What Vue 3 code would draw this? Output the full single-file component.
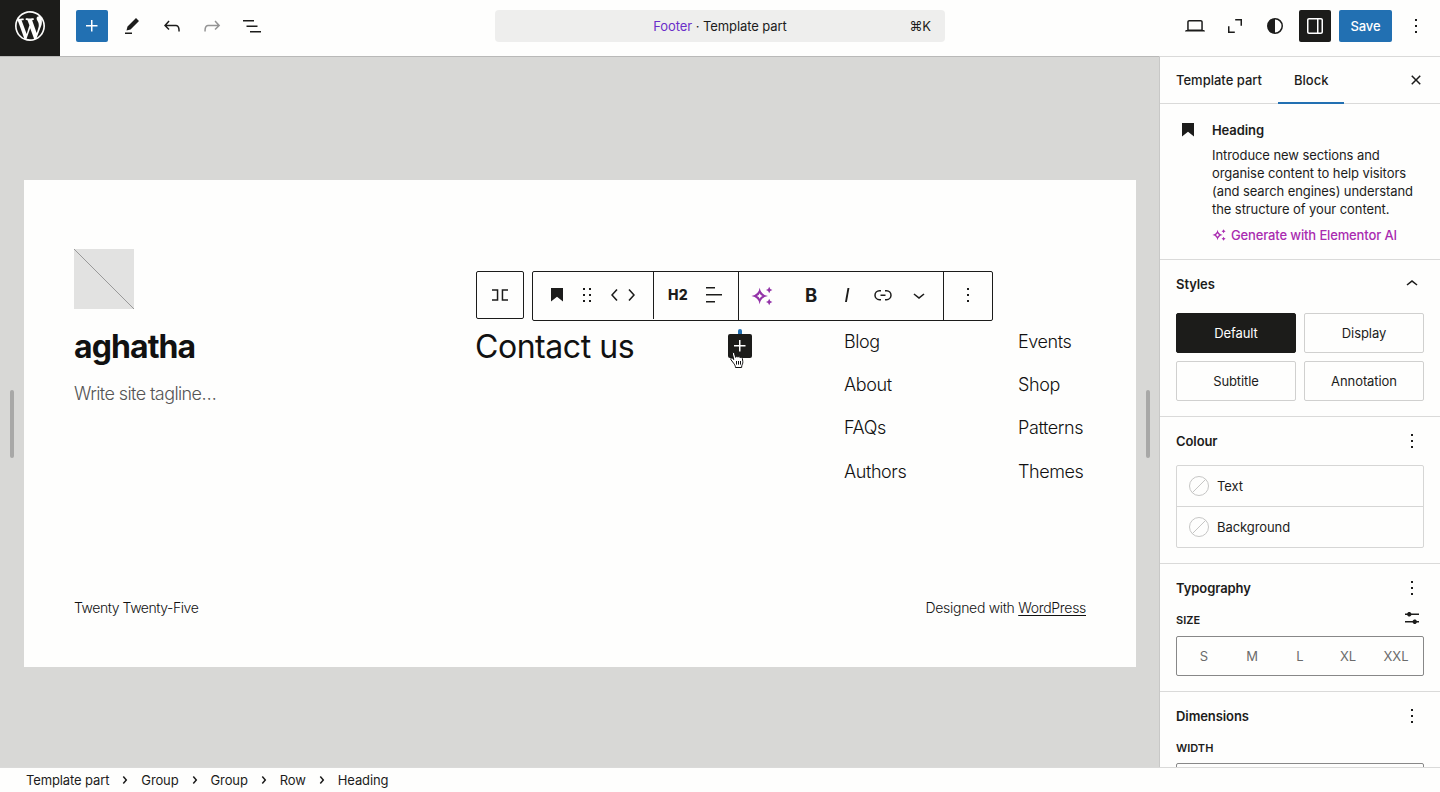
<script setup>
const icons = {
  plus: 'M11 12.5V17.5H12.5V12.5H17.5V11H12.5V6H11V11H6V12.5H11Z',
  pencil: 'm19 7-3-3-8.5 8.5-1 4 4-1L19 7Zm-7 11.5H5V20h7v-1.5Z',
  undo: 'M18.3 11.7c-.6-.6-1.4-.9-2.3-.9H6.7l2.9-3.3-1.1-1-4.5 5L8.5 16l1-1-2.7-2.7H16c.5 0 .9.2 1.3.5 1 1 1 3.4 1 4.5v.3h1.5v-.2c0-1.5 0-4.3-1.5-5.7z',
  redo: 'M15.6 6.5l-1.1 1 2.9 3.3H8c-.9 0-1.7.3-2.3.9-1.4 1.5-1.4 4.2-1.4 5.6v.2h1.5v-.3c0-1.1 0-3.5 1-4.5.3-.3.7-.5 1.3-.5h9.2L14.5 15l1.1 1.1 4.6-4.6-4.6-5z',
  list: 'M3 6h11v1.5H3V6Zm3.5 5.5h11V13h-11v-1.5ZM21 17H10v1.5h11V17Z',
  laptop: 'M20.5 16h-.7V8c0-1.1-.9-2-2-2H6.2c-1.1 0-2 .9-2 2v8h-.7c-.8 0-1.5.7-1.5 1.5h20c0-.8-.7-1.5-1.5-1.5zM5.7 8c0-.3.2-.5.5-.5h11.6c.3 0 .5.2.5.5v7.6H5.7V8z',
  expand: 'M12.2 5H19v6.8h-1.5V6.5h-5.3V5ZM5 12.2h1.5v5.3h5.3V19H5v-6.8Z',
  contrast: 'M20 12a8 8 0 1 1-16 0 8 8 0 0 1 16 0Zm-1.5 0a6.5 6.5 0 0 1-6.5 6.5v-13a6.5 6.5 0 0 1 6.5 6.5Z',
  drawer: 'M18 4H6c-1.1 0-2 .9-2 2v12c0 1.1.9 2 2 2h12c1.1 0 2-.9 2-2V6c0-1.1-.9-2-2-2zm-4 14.5H6c-.3 0-.5-.2-.5-.5V6c0-.3.2-.5.5-.5h8v13zm4.5-.5c0 .3-.2.5-.5.5h-2.5v-13H18c.3 0 .5.2.5.5v12z',
  more: 'M13 19h-2v-2h2v2zm0-6h-2v-2h2v2zm0-6h-2V5h2v2z',
  close: 'M12 13.06l3.712 3.713 1.061-1.06L13.061 12l3.712-3.712-1.06-1.06L12 10.938 8.288 7.227l-1.061 1.06L10.939 12l-3.712 3.712 1.06 1.061L12 13.061z',
  heading: 'M6 5V18.5911L12 13.8473L18 18.5911V5H6Z',
  up: 'M6.5 12.4L12 8l5.5 4.4-.9 1.2L12 10l-4.5 3.6-1-1.2z',
  down: 'M17.5 11.6L12 16l-5.5-4.4.9-1.2L12 14l4.5-3.6 1 1.2z',
  left: 'M14.6 7l-1.2-1L8 12l5.4 6 1.2-1-4.6-5z',
  right: 'M10.6 6L9.4 7l4.6 5-4.6 5 1.2 1 5.4-6z',
  drag: 'M8 7h2V5H8v2zm0 6h2v-2H8v2zm0 6h2v-2H8v2zm6-14v2h2V5h-2zm0 8h2v-2h-2v2zm0 6h2v-2h-2v2z',
  align: 'M13 5.5H4V4h9v1.5Zm7 7H4V11h16v1.5Zm-7 7H4V18h9v1.5Z',
  italic: 'M12.5 5L10 19h1.9l2.5-14z',
  link: 'M10 17.389H8.444A5.194 5.194 0 1 1 8.444 7H10v1.5H8.444a3.694 3.694 0 0 0 0 7.389H10v1.5ZM14 7h1.556a5.194 5.194 0 0 1 0 10.39H14v-1.5h1.556a3.694 3.694 0 0 0 0-7.39H14V7Zm-4.5 6h5v-1.5h-5V13Z',
  crumb: 'M10.8622 8.04053L14.2805 12.0286L10.8622 16.0167L9.72327 15.0405L12.3049 12.0286L9.72327 9.01672L10.8622 8.04053Z',
  settings: 'm19 7.5h-7.628c-.3089-.87389-1.1423-1.5-2.122-1.5-.97966 0-1.81309.62611-2.12197 1.5h-2.12803v1.5h2.12803c.30888.87389 1.14231 1.5 2.12197 1.5.9797 0 1.8131-.62611 2.122-1.5h7.628z m0 7.5h-2.128c-.3089-.8739-1.1423-1.5-2.122-1.5s-1.8131.6261-2.122 1.5h-7.628v1.5h7.628c.3089.8739 1.1423 1.5 2.122 1.5s1.8131-.6261 2.122-1.5h2.128z',
  row: 'M4 6.3h6.3v11.4H4v-1.5h4.8V7.8H4V6.3ZM20 6.3h-6.3v11.4H20v-1.5h-4.8V7.8H20V6.3Z',
  sparkle: 'M8.700 3.800Q9.900 10.800 16.900 12 9.900 13.200 8.700 20.200 7.500 13.200.5 12 7.500 10.800 8.700 3.800Zm0 5.400Q8 11.300 5.900 12 8 12.700 8.700 14.800 9.400 12.700 11.500 12 9.400 11.300 8.700 9.200ZM18.200 2.800l1.100 2.100 2.100 1.100-2.100 1.100-1.100 2.100-1.100-2.100L15 6l2.100-1.100 1.100-2.100ZM18.200 14.800l1.100 2.100 2.100 1.100-2.100 1.100-1.100 2.100-1.100-2.100L15 18l2.100-1.100 1.100-2.100Z',
}
const wp = 'M20 10c0-5.51-4.49-10-10-10C4.48 0 0 4.49 0 10c0 5.52 4.48 10 10 10 5.51 0 10-4.48 10-10zM7.78 15.37L4.37 6.22c.55-.02 1.17-.08 1.17-.08.5-.06.44-1.13-.06-1.11 0 0-1.45.11-2.37.11-.18 0-.37 0-.58-.01C4.12 2.69 6.87 1.11 10 1.11c2.33 0 4.45.87 6.05 2.34-.68-.11-1.65.39-1.65 1.58 0 .74.45 1.36.9 2.1.35.61.55 1.36.55 2.46 0 1.49-1.4 5-1.4 5l-3.03-8.37c.54-.02.82-.17.82-.17.5-.05.44-1.25-.06-1.22 0 0-1.44.12-2.38.12-.87 0-2.33-.12-2.33-.12-.5-.03-.56 1.2-.06 1.22l.92.08 1.26 3.41zM17.41 10c.24-.64.74-1.87.43-4.25.7 1.29 1.05 2.71 1.05 4.25 0 3.29-1.73 6.24-4.4 7.78.97-2.59 1.94-5.2 2.92-7.78zM6.1 18.09C3.12 16.65 1.11 13.53 1.11 10c0-1.3.23-2.48.72-3.59C3.25 10.3 4.67 14.2 6.1 18.09zm4.03-6.63l2.58 6.98c-.86.29-1.76.45-2.71.45-.79 0-1.57-.11-2.29-.33.81-2.38 1.62-4.74 2.42-7.1z'
const navA = ['Blog', 'About', 'FAQs', 'Authors']
const navB = ['Events', 'Shop', 'Patterns', 'Themes']
const crumbs = ['Template part', 'Group', 'Group', 'Row', 'Heading']
const sizes = ['S', 'M', 'L', 'XL', 'XXL']
const intro = ['Introduce new sections and', 'organise content to help visitors', '(and search engines) understand', 'the structure of your content.']
</script>

<template>
  <div class="app">
    <header class="top">
      <div class="logo"><svg width="36" height="36" viewBox="-2 -2 24 24"><path :d="wp" /></svg></div>
      <div class="tools">
        <button class="btn blue"><svg class="i" viewBox="0 0 24 24"><path :d="icons.plus" /></svg></button>
        <button class="btn"><svg class="i" viewBox="0 0 24 24"><path :d="icons.pencil" /></svg></button>
        <button class="btn"><svg class="i" viewBox="0 0 24 24"><path :d="icons.undo" /></svg></button>
        <button class="btn dim"><svg class="i" viewBox="0 0 24 24"><path :d="icons.redo" /></svg></button>
        <button class="btn"><svg class="i" viewBox="0 0 24 24"><path :d="icons.list" /></svg></button>
      </div>
      <div class="command">
        <span></span>
        <span class="doc"><em>Footer</em> · Template part</span>
        <span class="key">⌘K</span>
      </div>
      <div class="actions">
        <button class="btn"><svg class="i" viewBox="0 0 24 24"><path :d="icons.laptop" /></svg></button>
        <button class="btn"><svg class="i" viewBox="0 0 24 24"><path :d="icons.expand" /></svg></button>
        <button class="btn"><svg class="i" viewBox="0 0 24 24"><path fill-rule="evenodd" :d="icons.contrast" /></svg></button>
        <button class="btn dark"><svg class="i" viewBox="0 0 24 24"><path :d="icons.drawer" /></svg></button>
        <button class="save">Save</button>
        <button class="btn"><svg class="i" viewBox="0 0 24 24"><path :d="icons.more" /></svg></button>
      </div>
    </header>

    <div class="main">
      <section class="stage">
        <i class="handle"></i>
        <div class="canvas">
          <div class="upper">
            <div class="brand">
              <svg class="ph" width="60" height="60" viewBox="0 0 60 60"><path d="M0 0 60 60" /></svg>
              <h1>aghatha</h1>
              <p>Write site tagline…</p>
            </div>
            <div class="contact">
              <h2>Contact us</h2>
              <div class="toolbar">
                <div class="parent"><svg class="i" viewBox="0 0 24 24"><path :d="icons.row" /></svg></div>
                <div class="bar">
                  <div class="grp g1">
                    <svg class="i" viewBox="0 0 24 24"><path :d="icons.heading" /></svg>
                    <svg class="i drag" viewBox="0 0 24 24"><path :d="icons.drag" /></svg>
                    <svg class="i mv" viewBox="0 0 24 24"><path :d="icons.left" /></svg>
                    <svg class="i mv2" viewBox="0 0 24 24"><path :d="icons.right" /></svg>
                  </div>
                  <div class="grp g2">
                    <b class="h2t">H2</b>
                    <svg class="i" viewBox="0 0 24 24"><path :d="icons.align" /></svg>
                  </div>
                  <div class="grp g3">
                    <svg class="i ai" viewBox="0 0 24 24"><path fill-rule="evenodd" :d="icons.sparkle" /></svg>
                    <b class="bold">B</b>
                    <svg class="i" viewBox="0 0 24 24"><path :d="icons.italic" /></svg>
                    <svg class="i" viewBox="0 0 24 24"><path :d="icons.link" /></svg>
                    <svg class="i" viewBox="0 0 24 24"><path :d="icons.down" /></svg>
                  </div>
                  <div class="grp g4"><svg class="i" viewBox="0 0 24 24"><path :d="icons.more" /></svg></div>
                </div>
              </div>
              <div class="inserter"><svg class="i" viewBox="0 0 24 24"><path :d="icons.plus" /></svg></div>
              <svg class="cursor" width="17" height="18" viewBox="0 0 17 18">
                <path d="M4.6 12.2 2 8.8C1 7.4 2.5 6.5 3.7 7.6l1.1 1L3.4 3C3 1.3 5 .8 5.5 2.4l1.2 4C6.7 5 8.6 4.900 8.900 6.200 9.300 5.200 10.900 5.400 11.100 6.700 11.800 6 13.200 6.300 13.400 7.600l.4 3c.2 1.900-.6 2.900-1 4.100L12.600 16.500H6.500C6.400 14.800 5.600 13.500 4.600 12.200Z" />
                <path class="fingers" d="M7.500 10v3.600M9.500 10v3.600M11.500 10v3.600" />
              </svg>
            </div>
            <nav><a v-for="t in navA" :key="t">{{ t }}</a></nav>
            <nav class="second"><a v-for="t in navB" :key="t">{{ t }}</a></nav>
          </div>
          <footer class="credit"><span class="tt">Twenty Twenty-Five</span><span class="dw">Designed with <u>WordPress</u></span></footer>
        </div>
        <i class="handle"></i>
      </section>

      <aside class="side">
        <div class="tabs">
          <span class="tab t1">Template part</span><span class="tab on">Block</span>
          <svg class="i" viewBox="0 0 24 24"><path :d="icons.close" /></svg>
        </div>
        <div class="card">
          <svg class="i" viewBox="0 0 24 24"><path :d="icons.heading" /></svg>
          <div>
            <h3>Heading</h3>
            <p><span v-for="l in intro" :key="l">{{ l }}</span></p>
            <a class="gen"><svg width="14" height="14" viewBox="0 1 22 22"><path fill-rule="evenodd" :d="icons.sparkle" /></svg><span>Generate with Elementor AI</span></a>
          </div>
        </div>
        <div class="panel styles">
          <div class="head"><h3>Styles</h3><svg class="i" viewBox="0 0 24 24"><path :d="icons.up" /></svg></div>
          <div class="grid">
            <button class="active">Default</button><button>Display</button><button>Subtitle</button><button>Annotation</button>
          </div>
        </div>
        <div class="panel colour">
          <div class="head"><h3>Colour</h3><svg class="i" viewBox="0 0 24 24"><path :d="icons.more" /></svg></div>
          <div class="swatches">
            <div v-for="c in ['Text', 'Background']" :key="c">
              <svg width="20" height="20" viewBox="0 0 20 20"><circle cx="10" cy="10" r="9.5" /><path d="M3.300 16.700 16.700 3.300" /></svg><span>{{ c }}</span>
            </div>
          </div>
        </div>
        <div class="panel typo">
          <div class="head"><h3>Typography</h3><svg class="i" viewBox="0 0 24 24"><path :d="icons.more" /></svg></div>
          <div class="label"><span>SIZE</span><svg class="i" viewBox="0 0 24 24"><path :d="icons.settings" /></svg></div>
          <div class="sizes"><span v-for="s in sizes" :key="s">{{ s }}</span></div>
        </div>
        <div class="panel dims">
          <div class="head"><h3>Dimensions</h3><svg class="i" viewBox="0 0 24 24"><path :d="icons.more" /></svg></div>
          <div class="label"><span>WIDTH</span></div>
          <div class="sizes"></div>
        </div>
      </aside>
    </div>

    <div class="crumbs">
      <template v-for="(c, k) in crumbs" :key="k">
        <svg v-if="k" class="i" viewBox="0 0 24 24"><path :d="icons.crumb" /></svg><span>{{ c }}</span>
      </template>
    </div>
  </div>
</template>

<style>
html, body { margin: 0; overflow: hidden; }
</style>
<style scoped>
* { box-sizing: border-box; margin: 0; }
.app { width: 1440px; height: 792px; display: flex; flex-direction: column; background: #fefefd; color: #1c1c1b; font: 13px/18px Inter, "Liberation Sans", sans-serif; letter-spacing: -0.08px; }
.i { width: 24px; height: 24px; fill: currentColor; display: block; flex: none; }
button { font: inherit; color: inherit; letter-spacing: inherit; border: 0; background: none; padding: 0; }
.top { height: 56px; display: grid; grid-template-columns: 60px 435px 450px 495px; align-items: center; flex: none; }
.logo { width: 60px; height: 56px; background: #1c1c1a; display: flex; align-items: center; justify-content: center; padding-bottom: 4px; }
.logo svg { fill: #fefefd; }
.tools { display: flex; gap: 8px; padding: 0 0 4px 16px; }
.btn { width: 32px; height: 32px; border-radius: 2px; display: flex; align-items: center; justify-content: center; }
.btn.blue { background: #2270b2; color: #fff; }
.btn.dim { color: #949494; }
.btn.dark { background: #1c1c1a; color: #fff; }
.command { height: 32px; margin-bottom: 4px; border-radius: 4px; background: #eeeeed; display: grid; grid-template-columns: 60px 1fr 60px; align-items: center; }
.doc { text-align: center; }
.doc em { font-style: normal; color: #6a2fc9; }
.key { text-align: right; padding-right: 14px; }
.actions { display: flex; justify-content: flex-end; gap: 8px; padding: 0 8px 4px 0; }
.save { width: 53px; height: 32px; border-radius: 2px; background: #2270b2; color: #fff; font-weight: 500; }
.main { height: 711px; display: flex; flex: none; }
.stage { width: 1159px; border-top: 1px solid #b9b9b8; background: #d8d8d6; display: flex; align-items: flex-start; justify-content: space-between; padding: 0 9px 0 10px; flex: none; }
.handle { width: 4px; height: 68px; border-radius: 2px; background: #a8a8a7; margin-top: 333px; }
.canvas { width: 1112px; height: 487.500px; margin: 122.500px -1px 0; background: #fefefd; padding: 69.500px 50px 0; display: flex; flex-direction: column; font-weight: 300; color: #111; }
.upper { display: flex; height: 340px; }
.brand { width: 402px; }
.ph { background: #e2e2e1; display: block; }
.ph path { stroke: #999; stroke-width: 1; }
h1 { font-size: 32px; line-height: 38px; font-weight: 700; letter-spacing: -0.9px; margin-top: 19px; color: #111; }
.brand p { font-size: 18px; line-height: 26px; letter-spacing: -0.6px; color: #555; margin-top: 15px; }
.contact { width: 368px; position: relative; }
h2 { font-size: 32px; line-height: 38px; font-weight: 400; letter-spacing: -0.45px; margin: 79px 0 0 -1px; white-space: nowrap; }
.toolbar { position: absolute; left: 0; top: 22px; display: flex; gap: 8px; color: #1c1c1b; }
.parent { width: 48px; height: 48px; border: 1px solid #1c1c1b; border-radius: 2px; display: flex; align-items: center; justify-content: center; background: #fefefd; }
.bar { width: 461px; height: 50px; border: 1px solid #1c1c1b; border-radius: 2px; display: flex; background: #fefefd; flex: none; }
.grp { display: flex; align-items: center; height: 48px; border-right: 1px solid #1c1c1b; padding-bottom: 2px; }
.g1 { width: 121px; height: 47px; padding-left: 12px; padding-bottom: 1px; }
.drag { margin-left: 6px; }
.mv { margin-left: 4px; }
.mv2 { margin-left: -8px; }
.g2 { width: 85px; padding-left: 12px; gap: 12px; }
.h2t { width: 24px; text-align: center; font-size: 14px; font-weight: 800; letter-spacing: 0.3px; }
.g3 { width: 205px; padding-left: 12px; gap: 12px; }
.ai { color: #9333a8; margin: 2px 12px 0 0; }
.bold { width: 24px; text-align: center; font-size: 18.500px; font-weight: 700; }
.g4 { border: 0; padding-left: 12px; }
.inserter { position: absolute; left: 252px; top: 85px; width: 24px; height: 24px; border-radius: 2px; background: #1c1c1a; color: #fff; }
.inserter::before { content: ""; position: absolute; left: 10px; top: -5px; width: 4px; height: 5px; border-radius: 2px 2px 0 0; background: #2270b2; }
.cursor { position: absolute; left: 253px; top: 102px; }
.cursor path { fill: #fff; stroke: #111; stroke-width: 1; stroke-linejoin: round; }
.cursor .fingers { fill: none; }
nav { width: 174px; display: flex; flex-direction: column; gap: 17.400px; padding-top: 79.500px; font-size: 18px; line-height: 26px; letter-spacing: -0.4px; }
nav.second { width: auto; }
.credit { display: flex; justify-content: space-between; margin-top: 8px; font-size: 14px; line-height: 22px; letter-spacing: -0.45px; }
.dw { letter-spacing: -0.3px; }
.credit u { text-underline-offset: 2px; text-decoration-thickness: 1px; }
.side { width: 281px; border-left: 1px solid #c8c8c7; border-top: 1px solid #dadad9; background: #fefefd; overflow: hidden; flex: none; }
.tabs { height: 47px; display: flex; align-items: center; border-bottom: 1px solid #dadad9; padding-right: 12px; font-weight: 500; letter-spacing: 0; }
.tab { height: 47px; line-height: 47px; padding: 0 16px; }
.t1 { width: 118px; white-space: nowrap; }
.tab.on { width: 66px; border-bottom: 2px solid #2270b2; }
.tabs .i { margin-left: auto; }
h3 { font-size: 13px; line-height: 20px; font-weight: 600; }
.card { height: 155px; display: flex; gap: 12px; padding: 16px 16px 0; }
.card > .i { margin-top: -2px; }
.card p { margin-top: 6px; white-space: nowrap; }
.card p span { display: block; }
.gen { display: flex; align-items: center; gap: 5px; margin-top: 8px; color: #a92bb0; font-weight: 500; letter-spacing: -0.14px; white-space: nowrap; }
.gen svg { fill: currentColor; }
.panel { border-top: 1px solid #dadad9; padding: 12px 16px 0; }
.head { height: 24px; display: flex; justify-content: space-between; align-items: center; }
.styles { height: 157px; }
.grid { display: grid; grid-template-columns: 120px 120px; gap: 8px; margin-top: 17px; }
.grid button { height: 40px; border: 1px solid #d0d0cf; border-radius: 2px; }
.grid .active { background: #1c1c1a; border-color: #1c1c1a; color: #fff; }
.colour { height: 147px; }
.swatches { border: 1px solid #d6d6d5; border-radius: 2px; margin-top: 12px; }
.swatches div { height: 40px; display: flex; align-items: center; gap: 8px; padding-left: 12px; }
.swatches div + div { height: 41px; border-top: 1px solid #d6d6d5; }
.swatches svg { fill: none; stroke: #c6c6c5; }
.typo { height: 128px; }
.label { height: 24px; display: flex; justify-content: space-between; align-items: center; font-size: 11px; font-weight: 600; letter-spacing: 0; margin-top: 6px; }
.label span { padding-top: 3px; }
.sizes { height: 40px; margin-top: 6px; border: 1px solid #888; border-radius: 2px; display: grid; grid-template-columns: repeat(5, 48px); padding-left: 3px; align-items: center; text-align: center; color: #6b6b6b; }
.dims .sizes { margin-top: 5px; }
.crumbs { height: 25px; display: flex; align-items: center; padding-left: 26px; border-top: 1px solid #dadad9; letter-spacing: -0.12px; }
.crumbs .i { margin: 0 4px; }
</style>
